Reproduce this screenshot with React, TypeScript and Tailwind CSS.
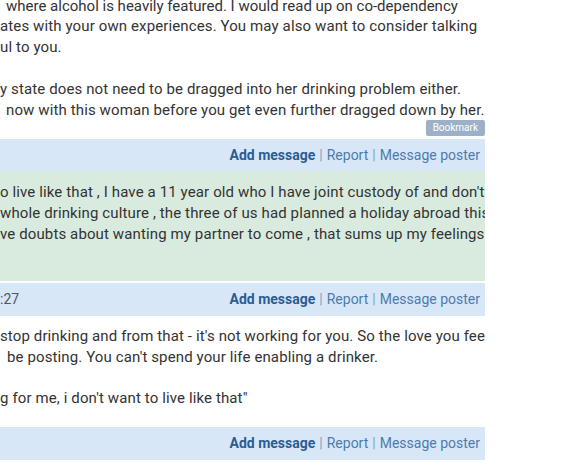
import React from "react";

const font = { fontFamily: "Roboto, 'Liberation Sans', sans-serif" };

const Actions = ({ left }: { left?: string }) => (
  <div className="flex items-center justify-between h-full pr-[5px] text-[14px]">
    <span className="text-[#555]">{left}</span>
    <div className="flex items-center">
      <a className="font-bold text-[#2b5d92]">Add message</a>
      <span className="text-[#8aa0b8] mx-[4px]">|</span>
      <a className="text-[#4f7bab]">Report</a>
      <span className="text-[#8aa0b8] mx-[4px]">|</span>
      <a className="text-[#4f7bab]">Message poster</a>
    </div>
  </div>
);

const Line = ({ pl = "pl-0 tracking-[0.12px]", children }: { pl?: string; children?: React.ReactNode }) => (
  <div className={`whitespace-nowrap h-[20.8px] ${pl}`}>{children}</div>
);

export default function App() {
  return (
    <div className="w-[584px] h-[464px] bg-white overflow-hidden" style={font}>
      <div className="w-[485px] overflow-hidden text-[15px] text-[#333] leading-[20.8px]">
        <div className="-mt-[4.4px]">
          <Line pl="pl-[6px]">where alcohol is heavily featured. I would read up on co-dependency</Line>
          <Line>ates with your own experiences. You may also want to consider talking</Line>
          <Line>ul to you.</Line>
          <Line />
          <Line>y state does not need to be dragged into her drinking problem either.</Line>
          <Line pl="pl-[6px] tracking-[0.12px]">now with this woman before you get even further dragged down by her.</Line>
        </div>
        <div className="flex justify-end mb-[3px]">
          <span className="bg-[#9cb1c8] text-white text-[10px] leading-[16px] h-[16px] px-[7px] rounded-[2px]">
            Bookmark
          </span>
        </div>
        <div className="bg-[#d7e7f8] h-[32px]">
          <Actions />
        </div>
        <div className="bg-[#d9ebdf] h-[110px] pt-[10.6px]">
          <Line>o live like that , I have a 11 year old who I have joint custody of and don't</Line>
          <Line>whole drinking culture , the three of us had planned a holiday abroad this</Line>
          <Line>ve doubts about wanting my partner to come , that sums up my feelings</Line>
        </div>
        <div className="h-[2px] bg-white" />
        <div className="bg-[#d7e7f8] h-[33px]">
          <Actions left=":27" />
        </div>
        <div className="bg-white h-[111px] pt-[9.6px]">
          <Line>stop drinking and from that - it's not working for you. So the love you feel</Line>
          <Line pl="pl-[7px] tracking-[0.12px]">be posting. You can't spend your life enabling a drinker.</Line>
          <Line />
          <Line>g for me, i don't want to live like that"</Line>
        </div>
        <div className="bg-[#d7e7f8] h-[33px]">
          <Actions />
        </div>
      </div>
    </div>
  );
}
